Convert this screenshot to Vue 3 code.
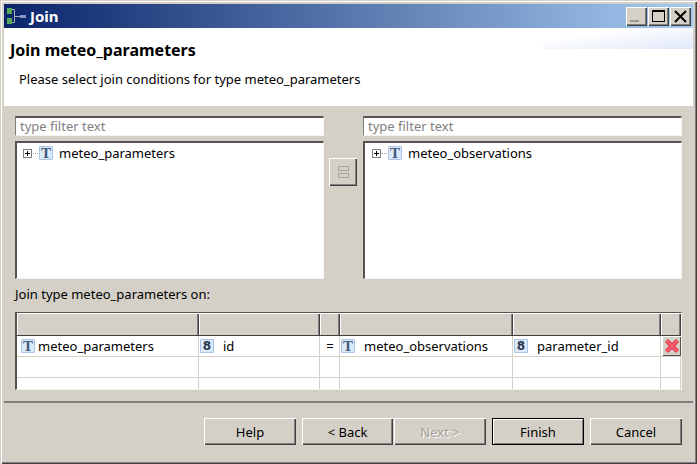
<template>
  <div class="window">
    <div class="titlebar">
      <svg class="app-icon" width="20" height="20" viewBox="0 0 20 20">
        <rect x="1" y="2" width="5" height="6" fill="#5aa65a" />
        <rect x="1" y="12" width="5" height="6" fill="#5aa65a" />
        <path d="M6 3.5h2.5v13H6M8.5 10.5h6" fill="none" stroke="#a9adb8" />
        <rect x="14" y="9" width="6" height="3" fill="#8d93c4" />
      </svg>
      <span class="title-text">Join</span>
      <div class="win-buttons">
        <span class="win-btn"><i class="min-glyph"></i></span>
        <span class="win-btn"><i class="max-glyph"></i></span>
        <span class="win-btn close-btn">
          <svg width="13" height="13" viewBox="0 0 13 13"><path d="M1 1l11 11M12 1L1 12" stroke="#000" stroke-width="2" /></svg>
        </span>
      </div>
    </div>

    <div class="header">
      <h1 class="header-title">Join meteo_parameters</h1>
      <p class="header-desc">Please select join conditions for type meteo_parameters</p>
    </div>

    <div class="body">
      <div class="pickers">
        <div class="picker">
          <div class="filter">type filter text</div>
          <div class="tree">
            <div class="tree-row">
              <span class="plus"></span><span class="dots"></span>
              <span class="type-icon">T</span>
              <span class="tree-label">meteo_parameters</span>
            </div>
          </div>
        </div>
        <div class="middle">
          <div class="join-btn"><i></i><i></i></div>
        </div>
        <div class="picker right">
          <div class="filter">type filter text</div>
          <div class="tree">
            <div class="tree-row">
              <span class="plus"></span><span class="dots"></span>
              <span class="type-icon">T</span>
              <span class="tree-label">meteo_observations</span>
            </div>
          </div>
        </div>
      </div>

      <div class="join-label">Join type meteo_parameters on:</div>

      <div class="table">
        <div class="thead">
          <div v-for="n in 6" :key="n" class="th"></div>
        </div>
        <div class="tr">
          <div class="td first"><span class="type-icon">T</span><span class="cell-text tight">meteo_parameters</span></div>
          <div class="td"><span class="type-icon num">8</span><span class="cell-text">id</span></div>
          <div class="td eq">=</div>
          <div class="td"><span class="type-icon">T</span><span class="cell-text">meteo_observations</span></div>
          <div class="td"><span class="type-icon num">8</span><span class="cell-text">parameter_id</span></div>
          <div class="td del">
            <span class="del-btn">
              <svg width="16" height="16" viewBox="0 0 16 16">
                <path d="M2.5 2.5l11 11M13.5 2.5l-11 11" stroke="#e8384c" stroke-width="4.4" />
                <path d="M2.5 2.5l11 11M13.5 2.5l-11 11" stroke="#f8707c" stroke-width="1.4" />
              </svg>
            </span>
          </div>
        </div>
        <div v-for="r in 2" :key="r" class="tr" :class="{ short: r === 2 }">
          <div v-for="n in 6" :key="n" class="td"></div>
        </div>
      </div>
    </div>

    <div class="footer">
      <div class="buttons">
        <button v-for="b in buttons" :key="b.label" class="btn" :class="b.cls" type="button">{{ b.label }}</button>
      </div>
    </div>
  </div>
</template>

<script setup>
const buttons = [
  { label: 'Help', cls: 'help' },
  { label: '< Back', cls: 'back' },
  { label: 'Next >', cls: 'next' },
  { label: 'Finish', cls: 'finish' },
  { label: 'Cancel', cls: 'cancel' }
]
</script>

<style>
html, body { margin: 0; background: #d4d0c8; }
</style>

<style scoped>
.window {
  width: 697px;
  height: 464px;
  box-sizing: border-box;
  padding: 4px 4px 2px 4px;
  background: #d4d0c8;
  font-family: "Noto Sans", sans-serif;
  font-size: 13px;
  color: #000;
  overflow: hidden;
  box-shadow: inset 1px 1px 0 #d4d0c8, inset 2px 2px 0 #fff, inset -1px -1px 0 #404040, inset -2px -2px 0 #808080;
}

.titlebar {
  height: 24px;
  display: flex;
  align-items: center;
  background: linear-gradient(to right, #0a246a, #a6caf0);
  color: #fff;
}
.app-icon { margin-left: 2px; flex: none; }
.title-text { margin-left: 4px; font-weight: 700; font-size: 15px; }
.win-buttons { margin-left: auto; margin-right: 2px; display: flex; gap: 1px; }
.win-btn {
  width: 21px;
  height: 19px;
  box-sizing: border-box;
  display: flex;
  align-items: center;
  justify-content: center;
  background: #d4d0c8;
  box-shadow: inset 1px 1px 0 #fff, inset -1px -1px 0 #404040, inset -2px -2px 0 #808080;
}
.min-glyph { width: 9px; height: 2px; background: #9a9a94; margin-top: 10px; margin-right: 4px; }
.max-glyph { width: 13px; height: 12px; box-sizing: border-box; border: 1px solid #000; border-top-width: 2px; }

.header {
  height: 78px;
  box-sizing: border-box;
  padding-top: 12px;
  background-color: #fff;
  background-image: linear-gradient(172deg, rgba(255, 255, 255, 0) 30%, #dfe7f8 100%);
  background-size: 150px 21px;
  background-repeat: no-repeat;
  background-position: right top;
  border-bottom: 2px solid;
  border-image: linear-gradient(to bottom, #808080 50%, #fff 50%) 1;
}
.header-title { margin: 0 0 0 6px; font-size: 16px; font-weight: 700; line-height: 20px; }
.header-desc { margin: 9px 0 0 15px; font-size: 13px; line-height: 20px; }

.body { padding: 10px 0 0 11px; }
.pickers { display: grid; grid-template-columns: 309px 39px 319px; }
.filter {
  height: 20px;
  box-sizing: border-box;
  background: #fff;
  color: #808080;
  padding-left: 4px;
  line-height: 17px;
  border-top: 2px solid #55534f;
  border-left: 1px solid #808080;
  border-right: 1px solid #f4f3f0;
  border-bottom: 1px solid #f4f3f0;
}
.tree {
  height: 138px;
  margin-top: 5px;
  box-sizing: border-box;
  background: #fff;
  border-top: 2px solid #55534f;
  border-left: 2px solid #55534f;
  border-right: 1px solid #f4f3f0;
  border-bottom: 1px solid #f4f3f0;
}
.tree-row { display: flex; align-items: center; height: 14px; margin-top: 3px; padding-left: 6px; }
.right .tree-row { padding-left: 7px; }
.plus {
  width: 9px;
  height: 9px;
  box-sizing: border-box;
  border: 1px solid #808080;
  flex: none;
  background:
    linear-gradient(#000, #000) center / 5px 1px no-repeat,
    linear-gradient(#000, #000) center / 1px 5px no-repeat;
}
.dots { width: 5px; border-top: 1px dotted #a0a0a0; margin: 0 1px; flex: none; }
.tree-label { margin-left: 6px; }

.type-icon {
  width: 14px;
  height: 14px;
  flex: none;
  box-sizing: border-box;
  border: 1px solid #a9c4e8;
  border-radius: 1px;
  background: #dce9f9;
  color: #45597a;
  font-family: "Liberation Serif", serif;
  font-weight: 700;
  font-size: 15px;
  line-height: 12px;
  text-align: center;
}
.type-icon.num { font-family: "DejaVu Sans", sans-serif; font-size: 12px; color: #2d3a4d; }

.middle { padding-top: 42px; padding-left: 5px; }
.join-btn {
  width: 28px;
  height: 28px;
  box-sizing: border-box;
  display: flex;
  flex-direction: column;
  align-items: center;
  justify-content: center;
  gap: 2px;
  background: #d4d0c8;
  box-shadow: inset 1px 1px 0 #fff, inset -1px -1px 0 #404040, inset -2px -2px 0 #808080;
}
.join-btn i { display: block; width: 11px; height: 5px; box-sizing: border-box; border: 1px solid #a8a59e; }

.join-label { margin-top: 6px; height: 27px; line-height: 18px; font-size: 13px; }

.table {
  width: 667px;
  height: 78px;
  box-sizing: border-box;
  background: #fff;
  border-top: 1px solid #55534f;
  border-left: 2px solid #55534f;
  border-right: 1px solid #f4f3f0;
  border-bottom: 1px solid #f4f3f0;
  overflow: hidden;
}
.thead, .tr { display: grid; grid-template-columns: 182px 121px 20px 173px 148px 20px; }
.thead { height: 22px; border-bottom: 1px solid #404040; }
.th { background: #d4d0c8; box-shadow: inset 1px 1px 0 #fff, inset -1px 0 0 #404040, inset -2px 0 0 #808080; }
.tr { height: 21px; box-sizing: border-box; border-bottom: 1px solid #d4d0c8; }
.tr.short { height: 12px; border-bottom: none; }
.td {
  display: flex;
  align-items: center;
  border-right: 1px solid #d4d0c8;
  padding-left: 1px;
  min-width: 0;
}
.td.first { padding-left: 4px; }
.cell-text { margin-left: 9px; white-space: nowrap; }
.cell-text.tight { margin-left: 3px; }
.td.eq { justify-content: center; padding: 0 0 0 1px; }
.td.del { padding: 0 0 0 1px; }
.del-btn {
  width: 19px;
  height: 20px;
  flex: none;
  display: flex;
  align-items: center;
  justify-content: center;
  background: #d4d0c8;
  box-shadow: inset 1px 1px 0 #fff, inset -1px -1px 0 #55534f;
}

.footer {
  margin-top: 11px;
  border-top: 2px solid;
  border-image: linear-gradient(to bottom, #808080 50%, #fff 50%) 1;
}
.buttons { display: flex; padding: 15px 0 0 200px; }
.btn {
  width: 92px;
  height: 27px;
  padding: 0;
  box-sizing: border-box;
  margin: 0;
  border: none;
  background: #d4d0c8;
  font-family: inherit;
  font-size: 13px;
  color: #000;
  box-shadow: inset 1px 1px 0 #fff, inset -1px -1px 0 #404040, inset -2px -2px 0 #808080;
}
.back { margin-left: 6px; width: 91px; }
.next { margin-left: 1px; color: #a3a098; text-shadow: 1px 1px 0 #fff; }
.finish { margin-left: 6px; box-shadow: inset 0 0 0 1px #000, inset 2px 2px 0 #fff, inset -2px -2px 0 #808080; }
.cancel { margin-left: 6px; }
</style>
